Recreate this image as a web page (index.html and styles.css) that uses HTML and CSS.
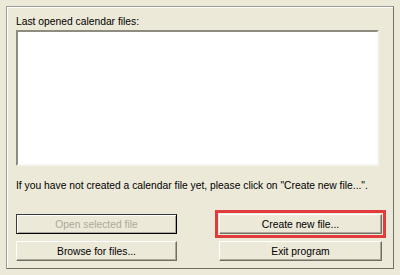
FILE: index.html
```html
<!DOCTYPE html>
<html>
<head>
<meta charset="utf-8">
<link rel="stylesheet" href="styles.css">
</head>
<body>
<div class="frame">
  <div class="label">Last opened calendar files:</div>
  <div class="list"></div>
  <div class="hint">If you have not created a calendar file yet, please click on "Create new file...".</div>
  <div class="buttons">
    <button class="btn btn-default" disabled>Open selected file</button>
    <div class="highlight"><button class="btn">Create new file...</button></div>
    <button class="btn">Browse for files...</button>
    <button class="btn">Exit program</button>
  </div>
</div>
</body>
</html>
```
FILE: styles.css
```css
html, body {
  margin: 0;
  padding: 0;
  background: #ECE9D8;
}
body {
  width: 400px;
  height: 275px;
  overflow: hidden;
  font-family: "Liberation Sans", Arial, sans-serif;
  font-size: 10.3px;
  color: #000;
}
.frame {
  box-sizing: border-box;
  margin: 6px 0 0 6px;
  width: 388px;
  height: 263px;
  border: 1px solid #9f9d92;
  border-right-color: #716f64;
  border-bottom-color: #716f64;
  box-shadow: inset 1px 1px #fff;
  padding: 8px 9px 0 9px;
  display: flex;
  flex-direction: column;
}
.label {
  height: 15px;
  line-height: 13px;
  white-space: nowrap;
}
.list {
  box-sizing: border-box;
  width: 363px;
  height: 136px;
  background: #fff;
  border-top: 2px solid #8e8c80;
  border-left: 2px solid #8e8c80;
  border-right: 2px solid #f6f5ee;
  border-bottom: 2px solid #f6f5ee;
}
.hint {
  margin-top: 13px;
  line-height: 13px;
  height: 13px;
  white-space: nowrap;
}
.buttons {
  margin-top: 22px;
  display: grid;
  grid-template-columns: 161px 163px;
  column-gap: 42px;
  row-gap: 7px;
}
.btn {
  box-sizing: border-box;
  height: 20px;
  width: 100%;
  margin: 0;
  padding: 0;
  font-family: "Liberation Sans", Arial, sans-serif;
  font-size: 10.3px;
  color: #000;
  background: #ECE9D8;
  border: 1px solid;
  border-color: #fff #716f64 #716f64 #fff;
  box-shadow: inset -1px -1px #aca899;
}
.btn-default {
  border-color: #3a3a3a #000 #000 #3a3a3a;
  box-shadow: inset 1px 1px #fff, inset -1px -1px #aca899;
}
.btn:disabled {
  color: #aca899;
}
.highlight {
  position: relative;
}
.highlight::after {
  content: "";
  position: absolute;
  left: -4px;
  right: -4px;
  top: -4px;
  bottom: -4px;
  border: 3px solid #e23b3b;
  pointer-events: none;
}
```
